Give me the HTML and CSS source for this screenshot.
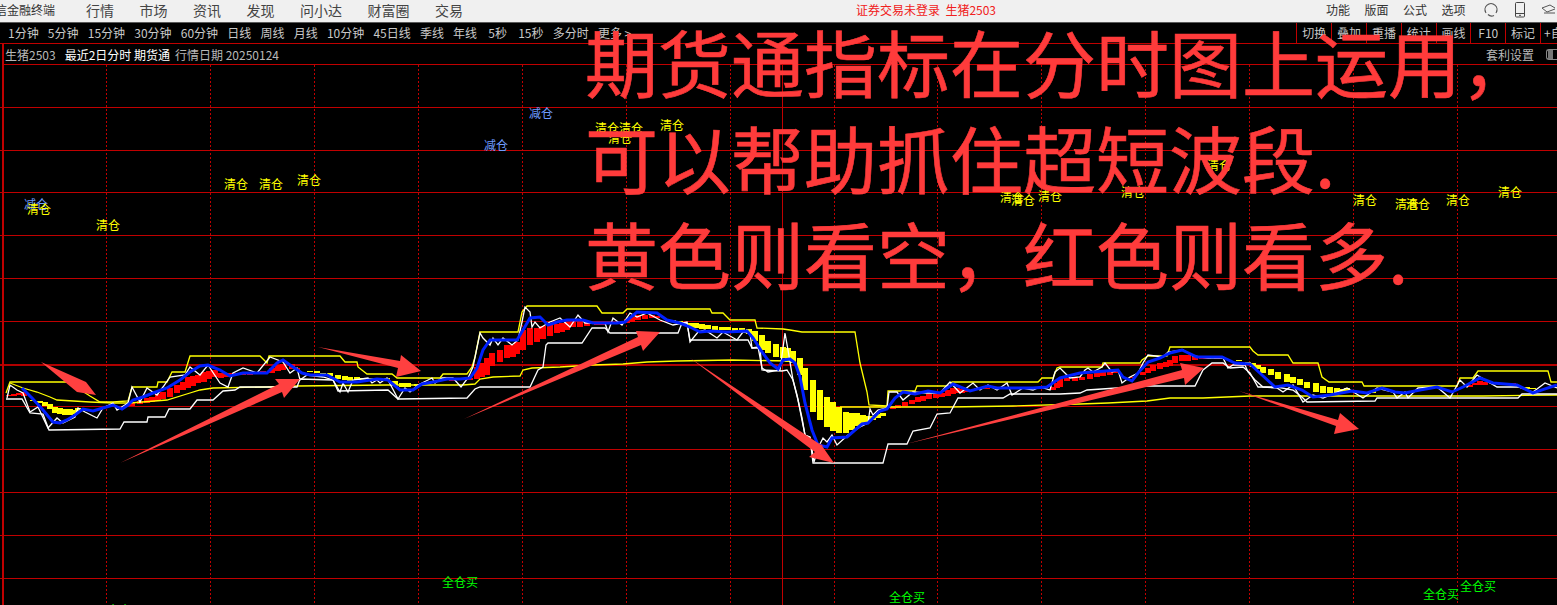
FILE: index.html
```html
<!DOCTYPE html>
<html lang="zh-CN">
<head>
<meta charset="utf-8">
<title>金融终端</title>
<link rel="stylesheet" href="styles.css">
</head>
<body>
<div class="app">
  <header class="menubar">
    <div class="brand">信金融终端</div>
    <nav class="menu">
      <span>行情</span><span>市场</span><span>资讯</span><span>发现</span><span>问小达</span><span>财富圈</span><span>交易</span>
    </nav>
    <div class="notice">证券交易未登录&nbsp; 生猪2503</div>
    <nav class="menu-right">
      <span>功能</span><span>版面</span><span>公式</span><span>选项</span>
    </nav>
    <div class="icons">
      <svg class="icon" width="16" height="16" viewBox="0 0 16 16"><path d="M3 11A6 6 0 1 1 13 11M3 9l-1.500 0M14.500 9L13 9M5 12.500c2 2 4 2 6 1" fill="none" stroke="#555" stroke-width="1.200"/></svg>
      <svg class="icon" width="10" height="16" viewBox="0 0 10 16"><rect x="0.500" y="0.500" width="9" height="14.500" rx="1" fill="none" stroke="#444"/><path d="M1 11.500H9M4 13.300H6" stroke="#444" fill="none"/></svg>
      <svg class="icon" width="14" height="14" viewBox="0 0 14 14"><path d="M1 5l8-3 5 3M1 5l5 4 8-3M3 10h12" fill="none" stroke="#555"/></svg>
    </div>
  </header>

  <div class="toolbar">
    <div class="periods">
      <span>1分钟</span><span>5分钟</span><span>15分钟</span><span>30分钟</span><span>60分钟</span><span>日线</span><span>周线</span><span>月线</span><span>10分钟</span><span>45日线</span><span>季线</span><span>年线</span><span class="wide">5秒</span><span class="wide">15秒</span><span>多分时</span><span>更多 &gt;</span>
    </div>
    <div class="tools">
      <span>切换</span><span>叠加</span><span>重播</span><span>统计</span><span>画线</span><span>F10</span><span>标记</span><span class="cut">+自</span>
    </div>
  </div>

  <div class="infobar">
    <span class="info-name">生猪2503</span>
    <span class="info-main">最近2日分时 期货通</span>
    <span class="info-date">行情日期 20250124</span>
    <span class="info-right">套利设置</span>
    <span class="toggle"><i></i></span>
  </div>

  <svg class="chart" width="1557" height="540" viewBox="0 65 1557 540">
    <g class="grid">
      <path d="M0 107.500H1557M0 150.500H1557M0 192.500H1557M0 235.500H1557M0 278.500H1557M0 321.500H1557M0 406.500H1557M0 449.500H1557M0 492.500H1557M0 535.500H1557M0 578.500H1557"/>
      <path class="grid-thick" d="M0 365H1557"/>
      <path class="grid-axis" d="M3 65V605"/>
      <path class="grid-solid" d="M782.500 65V605"/>
      <path class="grid-dots" d="M106.500 65V605M210.500 65V605M314.500 65V605M418.500 65V605M522.500 65V605M626.500 65V605M730.500 65V605M834.500 65V605M937.500 65V605M1041.500 65V605M1145.500 65V605M1249.500 65V605M1353.500 65V605M1457.500 65V605"/>
    </g>

    <path class="bars bars-yellow" d="M33 400V401M40 401V403M45 402V406M50 404V409M55 407V413M60 408V414M65 409V415M70 409V415M74 410V414M78 408V412M310 371V372M317 371V373M323 373V374M330 373V376M338 375V379M345 376V380M350 377V382M357 377V380M363 378V380M370 378V380M378 378V380M387 378V381M395 381V385M402 383V387M408 383V387M417 384V386M673 320V321M680 321V322M690 323V327M696 323V328M702 324V329M708 325V329M715 326V330M722 327V330M728 327V330M735 328V331M742 328V331M749 329V334M755 331V341M762 335V350M768 341V353M776 344V357M783 347V358M788 348V362M793 351V363M800 358V375M805 368V390M813 380V412M820 390V420M827 397V427M833 402V431M839 407V433M846 412V433M852 413V430M857 413V426M863 415V424M868 416V422M873 416V420M878 414V418M883 413V416M1239 360V361M1248 362V363M1253 363V367M1258 365V369M1263 367V373M1271 369V375M1278 372V379M1287 374V382M1293 377V383M1300 379V385M1307 382V388M1316 383V392M1323 386V393M1330 387V393M1337 388V393M1342 389V393M1347 388V391M1360 391V393M1367 392V394M1373 391V393M1527 387V389M1533 388V389"/>
    <path class="bars bars-red" d="M9 395V396M14 394V396M19 393V395M24 392V396M132 403V406M140 401V404M147 398V403M152 397V402M158 394V401M163 392V399M170 388V397M177 385V393M183 382V390M188 377V388M193 376V386M198 375V383M204 372V382M209 371V379M215 370V377M221 373V378M227 373V377M233 373V376M243 372V375M250 372V375M257 372V374M263 371V373M272 368V373M278 365V371M283 364V370M292 364V369M297 368V370M452 379V381M470 378V380M477 367V379M482 363V377M487 358V375M492 353V366M500 350V362M507 345V358M513 345V357M517 342V354M523 330V350M530 328V345M537 328V342M543 326V339M550 325V336M557 324V333M562 323V332M567 322V330M573 321V327M580 321V327M587 322V326M597 323V325M603 323V325M627 319V323M632 317V322M638 315V320M645 315V319M652 315V318M657 316V318M893 407V409M898 405V408M905 402V406M912 400V404M918 397V402M923 396V401M929 394V399M936 394V398M942 393V397M948 390V396M953 388V394M957 388V393M962 389V393M968 390V392M977 388V390M987 388V389M1053 387V390M1057 383V388M1060 378V387M1067 378V381M1075 378V381M1082 377V380M1090 374V379M1097 373V377M1103 372V376M1110 371V375M1115 371V373M1132 377V378M1143 372V375M1148 368V373M1153 365V371M1160 363V369M1166 362V367M1170 360V366M1175 356V363M1182 355V361M1188 355V361M1195 357V360M1202 357V359M1208 357V359M1217 357V359M1437 386V388M1470 385V387M1475 383V385M1480 381V385M1485 382V385M1492 383V384M1513 383V385"/>

    <g class="series">
      <polyline class="line-yellow" points="6,393 10,382 68,382 90,396 100,402 113,402 128,401 132,387 157,387 158,382 167,382 172,372 185,372 190,356 260,356 267,363 269,356 340,356 345,362 357,362 358,367 367,374 392,374 397,378 440,378 443,374 467,374 472,367 475,357 480,332 518,332 522,312 527,306 597,306 602,313 623,313 627,309 710,309 712,313 723,313 730,320 755,320 757,328 783,329 790,330 802,332 855,332 860,363 867,392 869,405 887,406 888,391 915,391 917,386 950,386 952,382 1038,382 1042,378 1053,378 1057,368 1060,367 1102,367 1103,363 1140,363 1142,360 1148,356 1167,356 1170,347 1250,347 1253,351 1258,355 1288,355 1293,363 1318,363 1322,377 1329,382 1362,382 1364,386 1457,386 1460,378 1473,378 1478,371 1548,371 1551,382 1557,382"/>
      <polyline class="line-yellow" points="10,383 23,388 37,392 50,397 57,400 90,402 113,403 130,403 167,400 190,393 200,390 213,388 267,387 297,386 387,385 463,385 475,384 480,379 493,377 520,376 523,370 532,368 560,367 593,365 623,364 647,362 677,361 732,360 790,361"/>
      <polyline class="line-yellow" points="840,407 950,407 1013,406 1080,404 1108,403 1147,401 1170,398 1203,398 1250,396 1483,396 1557,395"/>
      <polyline class="line-white" points="6,399 22,399 30,413 43,414 49,430 120,429 124,422 147,422 148,417 165,417 169,409 190,409 197,400 213,400 223,391 235,390 240,387 297,387 300,379 333,380 338,391 388,390 398,399 467,398 475,389 480,387 530,387 538,370 543,367 546,345 548,343 582,343 592,328 605,328 610,333 678,333 682,323 687,323 690,340 748,340 752,348 760,348 762,370 782,371 787,370 793,380 798,400 805,435 810,438 813,463 883,463 888,444 907,444 913,431 930,428 937,414 950,413 958,398 1003,398 1010,394 1060,394 1080,393 1087,390 1147,386 1195,386 1203,370 1212,363 1223,363 1230,368 1243,367 1250,373 1258,387 1277,387 1293,390 1303,398 1307,402 1375,401 1377,398 1518,398 1522,394 1557,394"/>
      <polyline class="line-price" points="7,398 10,385 17,390 23,393 30,412 38,407 48,428 57,418 63,423 75,417 78,408 85,412 97,418 103,408 113,403 117,410 128,403 132,387 140,402 147,388 157,395 163,387 170,377 185,375 190,367 200,375 208,365 220,383 228,387 233,373 243,368 257,373 270,357 283,362 290,373 297,368 300,380 307,375 323,377 333,380 340,392 343,383 348,392 353,380 368,378 372,383 377,380 380,383 387,378 398,399 405,388 410,392 418,385 432,378 435,383 442,378 453,378 461,387 468,378 473,367 480,333 483,338 490,345 493,338 498,345 503,338 512,345 518,340 522,322 525,307 530,312 532,327 535,322 540,328 550,322 560,318 570,327 578,315 585,323 605,323 608,332 613,318 622,325 630,313 637,317 647,313 660,320 673,325 687,322 690,342 698,332 705,330 717,338 723,332 737,340 743,332 750,333 752,348 758,347 762,368 768,372 780,370 785,333 788,350 793,380 797,395 802,418 805,435 810,437 814,462 818,448 823,438 827,442 832,435 837,445 848,435 860,427 868,423 870,409 873,415 878,410 887,408 889,392 897,392 903,400 913,392 927,393 940,393 950,382 960,393 973,383 980,390 988,385 997,390 1007,383 1012,395 1023,388 1033,390 1040,387 1050,390 1055,372 1060,368 1070,378 1080,377 1085,370 1088,368 1093,372 1102,367 1105,363 1112,372 1118,370 1122,383 1130,377 1138,373 1143,363 1148,355 1163,357 1168,352 1183,350 1193,356 1208,358 1223,358 1228,368 1233,365 1245,365 1248,372 1255,380 1263,387 1277,388 1283,392 1293,385 1303,402 1313,395 1323,398 1347,388 1363,398 1377,388 1393,392 1397,398 1405,392 1408,398 1418,388 1437,387 1450,398 1460,380 1467,387 1477,375 1497,387 1518,387 1533,392 1545,383 1557,388"/>
      <polyline class="line-blue" points="22,388 32,398 43,410 53,422 60,423 67,420 75,415 83,409 93,411 103,408 113,405 122,409 128,405 133,400 143,397 153,393 167,388 180,380 190,372 200,366 208,365 220,370 230,376 243,373 257,373 267,373 277,363 283,360 290,365 302,373 310,375 327,375 340,382 357,382 377,379 388,380 400,390 413,390 422,384 433,382 447,379 460,379 470,378 477,368 483,350 490,340 517,340 523,330 530,318 540,317 548,325 557,322 567,320 583,320 593,323 617,323 625,322 637,312 657,313 667,320 680,323 690,327 700,332 710,331 727,332 747,331 753,338 762,352 770,363 778,369 783,360 790,359 795,363 800,377 805,403 812,430 818,445 827,447 832,438 847,437 855,430 862,424 868,423 880,411 887,409 895,398 903,392 915,394 928,391 940,393 953,384 970,391 988,386 997,388 1033,388 1047,387 1060,378 1080,373 1118,370 1123,377 1132,381 1138,373 1148,362 1160,358 1170,353 1182,350 1197,357 1222,357 1235,363 1250,364 1262,375 1275,387 1288,385 1302,390 1313,397 1330,395 1352,391 1367,393 1382,388 1395,392 1405,393 1420,390 1437,387 1452,392 1463,387 1480,378 1493,383 1517,385 1533,393 1557,385"/>
    </g>

    <g class="labels labels-blue">
      <text x="36" y="209">减仓</text><text x="496" y="150">减仓</text><text x="541" y="118">减仓</text>
    </g>
    <g class="labels labels-yellow">
      <text x="39" y="214">清仓</text><text x="108" y="230">清仓</text><text x="236" y="189">清仓</text><text x="271" y="189">清仓</text><text x="309" y="185">清仓</text><text x="607" y="133">清仓</text><text x="631" y="133">清仓</text><text x="620" y="143">清仓</text><text x="672" y="130">清仓</text><text x="1012" y="202">清仓</text><text x="1023" y="205">清仓</text><text x="1050" y="201">清仓</text><text x="1133" y="197">清仓</text><text x="1219" y="170">清仓</text><text x="1365" y="205">清仓</text><text x="1407" y="209">清仓</text><text x="1418" y="209">清仓</text><text x="1458" y="205">清仓</text><text x="1510" y="197">清仓</text>
    </g>
    <g class="labels labels-green">
      <text x="125" y="615">全仓买</text><text x="460" y="587">全仓买</text><text x="907" y="602">全仓买</text><text x="1441" y="599">全仓买</text><text x="1478" y="591">全仓买</text>
    </g>

    <g class="arrows">
      <polygon points="41,362 86,382 96,395 77,392"/>
      <polygon points="120,463 279,384 275,379 300,379 284,398 282,392"/>
      <polygon points="318,347 400,361 401,355 421,371 396,377 398,368"/>
      <polygon points="464,419 638,337 636,331 660,332 643,351 641,345"/>
      <polygon points="690,358 824,447 820,443 834,463 809,457 815,452"/>
      <polygon points="906,444 1182,370 1180,363 1204,368 1185,385 1184,378"/>
      <polygon points="1239,391 1338,420 1340,413 1359,429 1334,434 1336,426"/>
    </g>
  </svg>

  <div class="headline">期货通指标在分时图上运用，<br>可以帮助抓住超短波段.<br>黄色则看空，红色则看多.</div>
</div>
</body>
</html>
```

FILE: styles.css
```css
* { box-sizing: border-box; }
html, body { margin: 0; padding: 0; background: #000; }
body {
  width: 1557px;
  height: 605px;
  overflow: hidden;
  font-family: "Noto Sans CJK SC", "Liberation Sans", sans-serif;
}
.app { position: relative; width: 1557px; height: 605px; display: flex; flex-direction: column; overflow: hidden; }

.menubar {
  height: 23px;
  flex: none;
  display: flex;
  align-items: center;
  padding-bottom: 3px;
  background: #f0f0f0;
  border-bottom: 1px solid #5a5a5a;
  color: #333;
  font-size: 12px;
}
.brand { margin-left: -5px; width: 91px; white-space: nowrap; }
.menu { display: flex; gap: 25.500px; font-size: 14px; width: 770px; color: #444; }
.notice { color: #f02020; width: 470px; white-space: nowrap; }
.menu-right { display: flex; gap: 14.500px; width: 157px; }
.icons { display: flex; align-items: center; gap: 16px; }
.icon { flex: none; display: block; }

.toolbar {
  height: 21px;
  flex: none;
  display: flex;
  align-items: stretch;
  justify-content: space-between;
  background: #000;
  color: #c8c8c8;
  font-size: 12px;
  border-bottom: 1px solid #c00000;
  line-height: 20px;
}
.periods { display: flex; gap: 9.200px; padding-left: 8px; white-space: nowrap; }
.periods .wide { margin-left: 2px; }
.tools { display: flex; flex: none; }
.tools span { width: 34.800px; border-left: 1px solid #c00000; text-align: center; white-space: nowrap; overflow: hidden; }
.tools .cut { width: 17px; text-align: left; padding-left: 3px; }

.infobar {
  height: 21px;
  flex: none;
  display: flex;
  align-items: center;
  gap: 9px;
  margin-left: 2px;
  padding-left: 1px;
  border-left: 2px solid #c00000;
  border-bottom: 1px solid #c00000;
  font-size: 12px;
  color: #b8b8b8;
  white-space: nowrap;
}
.info-main { color: #fff; }
.info-date { margin-left: -4px; }
.info-right { margin-left: auto; }
.toggle { width: 11px; height: 11px; border: 1px solid #888; border-radius: 3px 0 0 3px; border-right: 0; margin-left: 3px; display: block; }
.toggle i { display: block; width: 5px; height: 9px; background: #777; margin-left: 1px; }

.chart { display: block; flex: none; background: #000; }
.grid path { fill: none; stroke: #c00000; stroke-width: 1; shape-rendering: crispEdges; }
.grid .grid-thick { stroke-width: 2; stroke: #b00000; }
.grid .grid-axis { stroke-width: 2; }
.grid .grid-dots { stroke-dasharray: 2 2; }

.bars { fill: none; stroke-width: 6; shape-rendering: crispEdges; }
.bars-yellow { stroke: #ffff00; }
.bars-red { stroke: #ff0000; }

.series polyline { fill: none; stroke-linejoin: miter; }
.line-yellow { stroke: #ffff00; stroke-width: 1.300; }
.line-white { stroke: #ffffff; stroke-width: 1.300; }
.line-price { stroke: #ffffff; stroke-width: 1.300; }
.line-blue { stroke: #0020ff; stroke-width: 3; }

.labels text { font-size: 12px; text-anchor: middle; }
.labels-blue text { fill: #6f9cff; }
.labels-yellow text { fill: #ffff00; }
.labels-green text { fill: #00ff00; }

.arrows polygon { fill: #ff4040; }

.headline {
  position: absolute;
  left: 585px;
  top: 12px;
  font-size: 73px;
  line-height: 96px;
  color: #ff3b3b;
  -webkit-text-stroke: 0.600px #ff3b3b;
  white-space: nowrap;
  pointer-events: none;
}
```
